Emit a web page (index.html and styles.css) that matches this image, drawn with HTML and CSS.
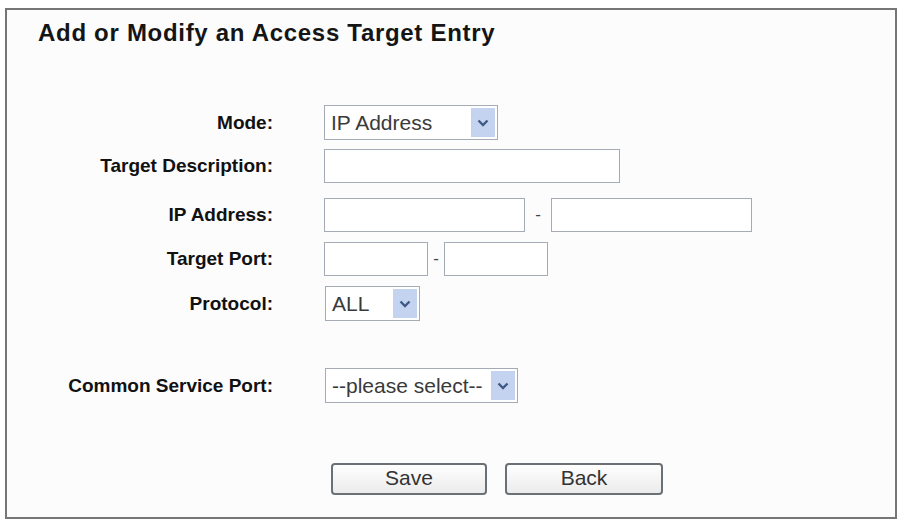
FILE: index.html
```html
<!DOCTYPE html>
<html>
<head>
<meta charset="utf-8">
<link rel="stylesheet" href="styles.css">
</head>
<body>
<div class="frame">
  <h1 class="title">Add or Modify an Access Target Entry</h1>
  <div class="form">
    <div class="row">
      <div class="label">Mode:</div>
      <div class="field">
        <div class="select sel-mode"><span class="sel-text">IP Address</span><span class="arrow"><svg width="12" height="8" viewBox="0 0 12 8"><path d="M1.5 1.5 L6 6 L10.5 1.5" fill="none" stroke="#3f5a86" stroke-width="2.4"/></svg></span></div>
      </div>
    </div>
    <div class="row">
      <div class="label">Target Description:</div>
      <div class="field"><div class="input in-desc"></div></div>
    </div>
    <div class="row row-ip">
      <div class="label">IP Address:</div>
      <div class="field">
        <div class="input in-ip"></div><span class="dash">-</span><div class="input in-ip"></div>
      </div>
    </div>
    <div class="row">
      <div class="label">Target Port:</div>
      <div class="field">
        <div class="input in-port"></div><span class="dash dash-port">-</span><div class="input in-port"></div>
      </div>
    </div>
    <div class="row">
      <div class="label">Protocol:</div>
      <div class="field">
        <div class="select sel-proto"><span class="sel-text">ALL</span><span class="arrow"><svg width="12" height="8" viewBox="0 0 12 8"><path d="M1.5 1.5 L6 6 L10.5 1.5" fill="none" stroke="#3f5a86" stroke-width="2.4"/></svg></span></div>
      </div>
    </div>
    <div class="row row-csp">
      <div class="label">Common Service Port:</div>
      <div class="field">
        <div class="select sel-csp"><span class="sel-text">--please select--</span><span class="arrow"><svg width="12" height="8" viewBox="0 0 12 8"><path d="M1.5 1.5 L6 6 L10.5 1.5" fill="none" stroke="#3f5a86" stroke-width="2.4"/></svg></span></div>
      </div>
    </div>
    <div class="row row-btn">
      <div class="label"></div>
      <div class="field buttons">
        <button class="btn btn-save">Save</button>
        <button class="btn btn-back">Back</button>
      </div>
    </div>
  </div>
</div>
</body>
</html>
```
FILE: styles.css
```css
html, body {
  margin: 0;
  padding: 0;
  background: #ffffff;
}
body {
  width: 898px;
  height: 523px;
  overflow: hidden;
  font-family: "Liberation Sans", Arial, sans-serif;
}
.frame {
  box-sizing: border-box;
  margin: 8px 1px 0 5px;
  width: 892px;
  height: 511px;
  border: 2px solid #767676;
  background: #fcfcfc;
  padding: 0;
}
.title {
  margin: 0;
  padding: 9px 0 0 31px;
  font-size: 24px;
  font-weight: bold;
  letter-spacing: 0.7px;
  color: #151515;
  line-height: 28px;
}
.form {
  margin-top: 58px;
  display: flex;
  flex-direction: column;
  gap: 10px;
}
.row {
  display: grid;
  grid-template-columns: 266px 1fr;
  column-gap: 51px;
  align-items: center;
  height: 34px;
}
.row-ip { margin-top: 5px; }
.row-csp { margin-top: 38px; }
.row-btn { margin-top: 51px; height: 32px; }
.label {
  text-align: right;
  font-size: 19px;
  font-weight: bold;
  color: #111;
}
.field {
  display: flex;
  align-items: center;
  height: 100%;
}
.input {
  box-sizing: border-box;
  height: 34px;
  border: 1px solid #a4abb4;
  background: #fff;
}
.in-desc { width: 296px; }
.in-ip { width: 201px; }
.in-port { width: 104px; }
.dash {
  font-size: 17px;
  color: #444;
  width: 26px;
  text-align: center;
}
.dash-port { width: 16px; }
.select {
  box-sizing: border-box;
  height: 35px;
  border: 1px solid #a4abb4;
  background: #fff;
  display: flex;
  align-items: center;
  justify-content: space-between;
}
.sel-text {
  padding-left: 6px;
  font-size: 21px;
  color: #3a3a3a;
  white-space: nowrap;
}
.arrow {
  width: 24px;
  height: 29px;
  margin-right: 2px;
  background: #c4d4f0;
  display: flex;
  align-items: center;
  justify-content: center;
}
.sel-mode { width: 174px; }
.sel-proto { width: 95px; margin-left: 1px; }
.sel-csp { width: 193px; margin-left: 1px; }
.buttons {
  gap: 18px;
  padding-left: 7px;
}
.btn {
  box-sizing: border-box;
  height: 32px;
  border: 2px solid #6a7075;
  border-radius: 4px;
  background: linear-gradient(#fefefe, #ebebeb);
  font-family: "Liberation Sans", Arial, sans-serif;
  font-size: 21px;
  color: #333;
  padding: 0 0 2px 0;
}
.btn-save { width: 156px; }
.btn-back { width: 158px; }
```
